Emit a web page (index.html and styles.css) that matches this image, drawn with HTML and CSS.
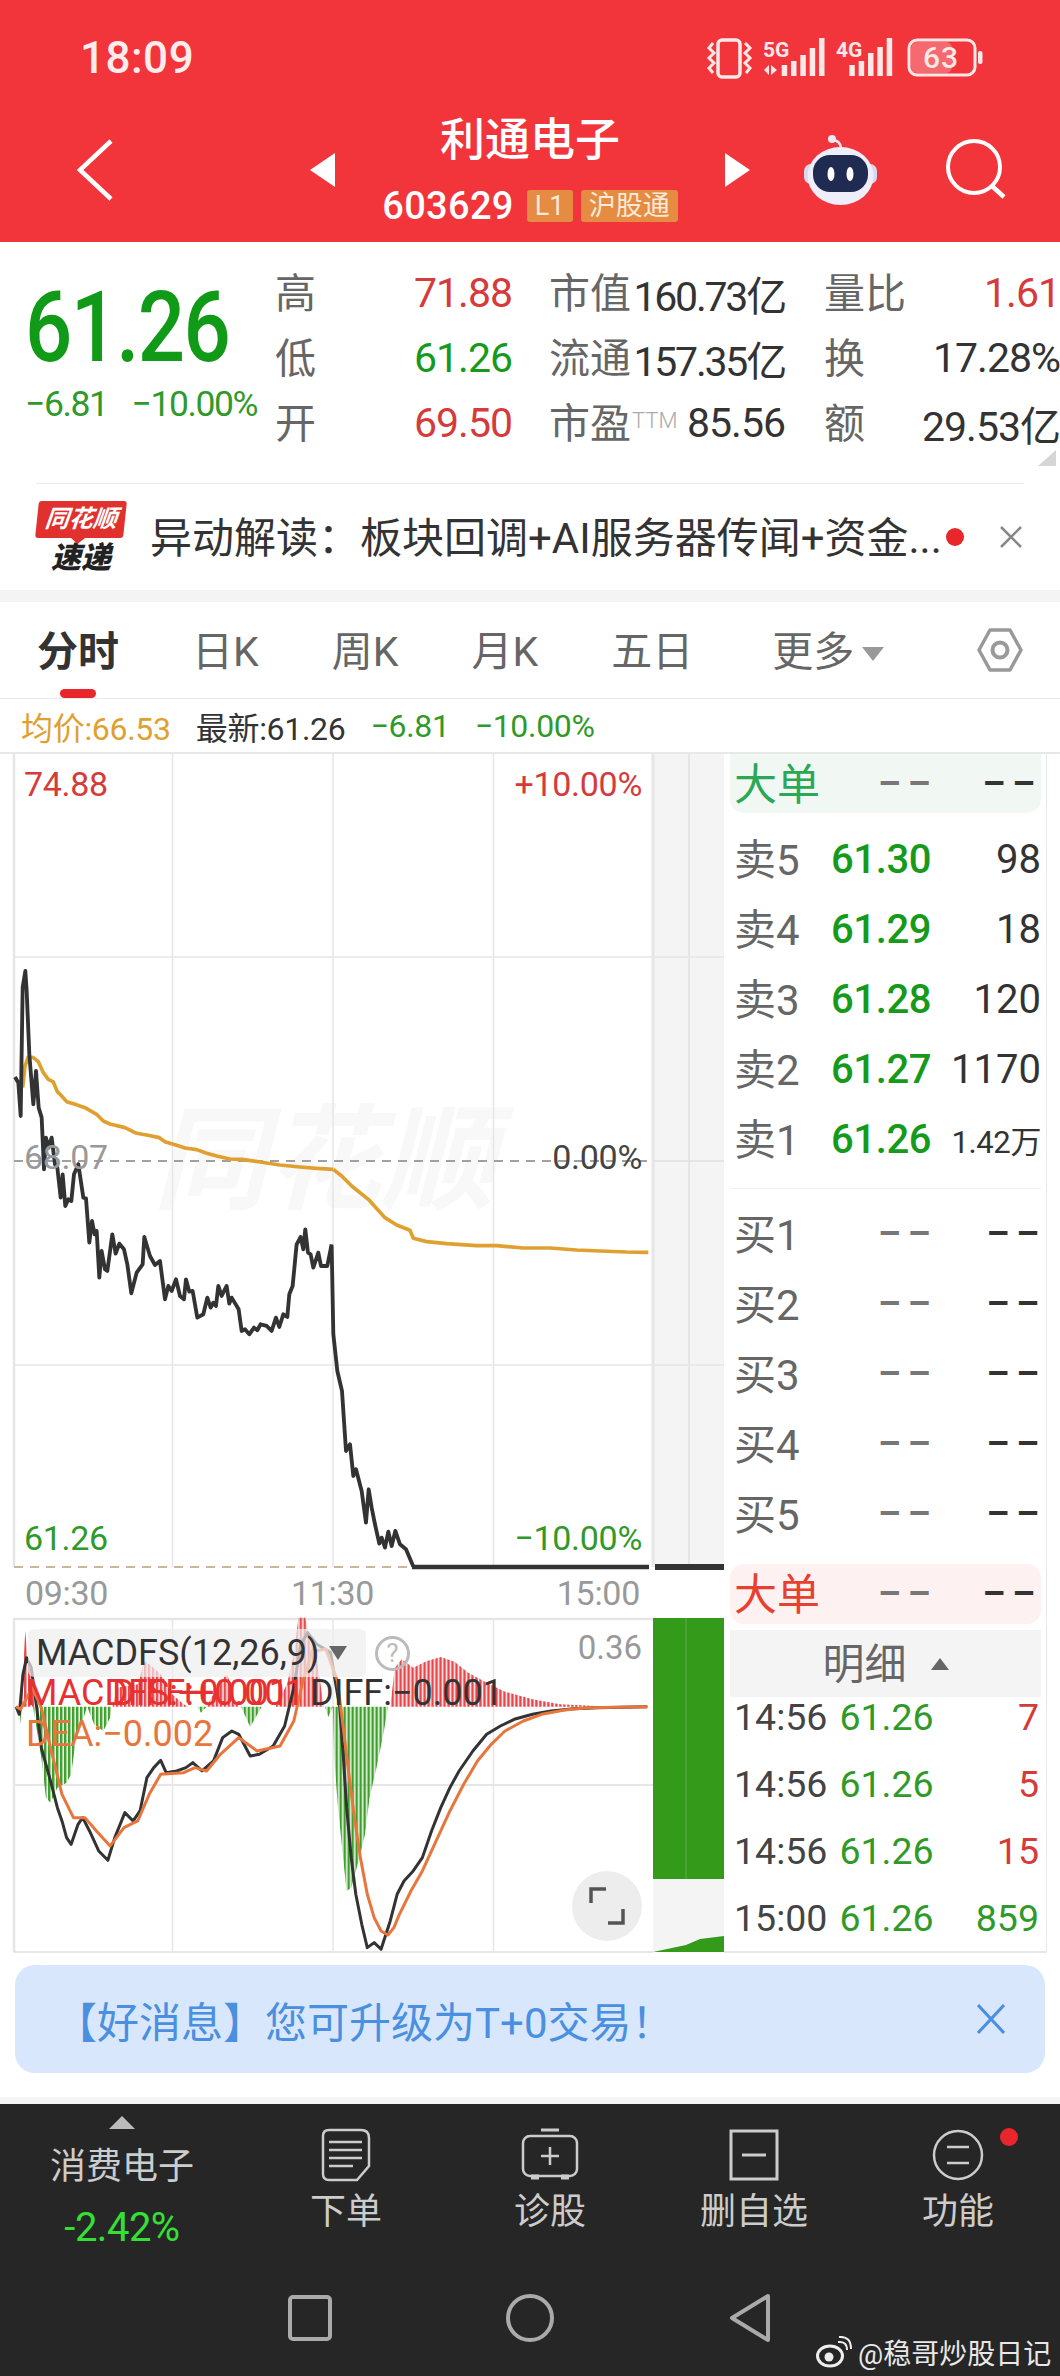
FILE: index.html
```html
<!DOCTYPE html>
<html lang="zh-CN">

<head>
    <meta charset="UTF-8">
    <meta name="viewport" content="width=device-width, initial-scale=1.0">
    <title>利通电子 603629</title>
    <link rel="stylesheet" href="styles.css">
</head>

<body>
    <header class="top">
        <div class="status">
            <span class="clock">18:09</span>
            <svg class="status-icons" width="280" height="56" viewBox="0 0 280 56">
                <g fill="none" stroke="#fde8e8" stroke-width="3">
                    <rect x="13" y="10" width="22" height="37" rx="4" stroke-width="3.5" />
                    <polyline points="8,13 4,18 9,23 4,28 9,33 4,38 8,43" />
                    <polyline points="40,13 45,18 40,23 45,28 40,33 45,38 41,43" />
                    <rect x="204" y="10" width="66" height="35" rx="8" />
                </g>
                <g fill="#fde8e8">
                    <polygon points="59,40 64,35 64,45" />
                    <polygon points="72,40 66,35 66,45" />
                    <rect x="76.7" y="35" width="5.5" height="11" />
                    <rect x="86" y="31" width="5.5" height="15" />
                    <rect x="95.3" y="25" width="5.5" height="21" />
                    <rect x="104.7" y="18" width="5.5" height="28" />
                    <rect x="114" y="8" width="5.5" height="38" />
                    <rect x="144.3" y="35" width="5.5" height="11" />
                    <rect x="153.7" y="31" width="5.5" height="15" />
                    <rect x="163" y="23" width="5.5" height="23" />
                    <rect x="172.3" y="17" width="5.5" height="29" />
                    <rect x="181.7" y="8" width="5.5" height="38" />
                    <rect x="206" y="12" width="41" height="31" rx="6" opacity="0.3" />
                    <rect x="273" y="21" width="4.5" height="13" rx="2" />
                    <text class="status-net" x="58" y="27">5G</text>
                    <text class="status-net" x="131" y="27">4G</text>
                    <text class="status-batt" x="236" y="38" text-anchor="middle">63</text>
                </g>
            </svg>
        </div>
        <div class="nav">
            <svg class="back" width="38" height="62" viewBox="0 0 38 62">
                <polyline points="35,2 4,31 35,60" fill="none" stroke="#fff" stroke-width="4.5" />
            </svg>
            <svg class="prev" width="25" height="34" viewBox="0 0 25 34">
                <polygon points="25,0 0,17 25,34" fill="#fff" />
            </svg>
            <div class="stock">
                <div class="stock-name">利通电子</div>
                <div class="stock-code">
                    <span>603629</span>
                    <span class="tag tag-l1">L1</span>
                    <span class="tag">沪股通</span>
                </div>
            </div>
            <svg width="25" height="34" viewBox="0 0 25 34">
                <polygon points="0,0 25,17 0,34" fill="#fff" />
            </svg>
            <svg class="robot" width="73" height="72" viewBox="0 0 73 72">
                <path d="M28 6 q8 0 9 8" fill="none" stroke="#efe9f6" stroke-width="2.5" />
                <circle cx="28" cy="5" r="4" fill="#efe9f6" />
                <rect x="0" y="30" width="73" height="20" rx="7" fill="#d9d8f0" />
                <ellipse cx="36.500" cy="42" rx="33" ry="29" fill="#eeedfa" />
                <rect x="9" y="21" width="55" height="37" rx="17" fill="#1f2b50" />
                <ellipse cx="27" cy="40" rx="3.500" ry="7" fill="#fff" />
                <ellipse cx="46" cy="40" rx="3.500" ry="7" fill="#fff" />
            </svg>
            <svg class="search" width="62" height="62" viewBox="0 0 62 62">
                <circle cx="29" cy="28" r="26" fill="none" stroke="#fff" stroke-width="4" />
                <line x1="47" y1="47" x2="59" y2="58" stroke="#fff" stroke-width="4.500" />
            </svg>
        </div>
    </header>

    <section class="quote">
        <div class="quote-main">
            <div class="last">61.26</div>
            <div class="change"><span>−6.81</span><span>−10.00%</span></div>
        </div>
        <div class="quote-grid">
            <div class="cell"><span class="cell-name">高</span><span class="up">71.88</span></div>
            <div class="cell"><span class="cell-name">市值</span><span class="tight">160.73亿</span></div>
            <div class="cell"><span class="cell-name">量比</span><span class="up">1.61</span></div>
            <div class="cell"><span class="cell-name">低</span><span class="down">61.26</span></div>
            <div class="cell"><span class="cell-name">流通</span><span class="tight">157.35亿</span></div>
            <div class="cell"><span class="cell-name">换</span><span>17.28%</span></div>
            <div class="cell"><span class="cell-name">开</span><span class="up">69.50</span></div>
            <div class="cell"><span class="cell-name">市盈<sup class="ttm">TTM</sup></span><span>85.56</span></div>
            <div class="cell"><span class="cell-name">额</span><span>29.53亿</span></div>
        </div>
        <div class="corner"></div>
    </section>

    <section class="news">
        <div class="logo">
            <div class="logo-flag">同花顺</div>
            <div class="logo-sub">速递</div>
        </div>
        <div class="news-text">异动解读：板块回调+AI服务器传闻+资金...</div>
        <span class="news-dot"></span>
        <svg class="news-close" width="24" height="24" viewBox="0 0 24 24">
            <path d="M2 2 L22 22 M22 2 L2 22" stroke="#888" stroke-width="2.500" />
        </svg>
    </section>

    <nav class="tabs">
        <span class="tab tab-active">分时</span>
        <span class="tab">日K</span>
        <span class="tab">周K</span>
        <span class="tab">月K</span>
        <span class="tab">五日</span>
        <span class="tab tab-more">更多<i class="tab-caret"></i></span>
        <svg class="tab-gear" width="46" height="44" viewBox="0 0 46 44">
            <polygon points="13,2 33,2 44,22 33,42 13,42 2,22" fill="none" stroke="#999" stroke-width="3.500" stroke-linejoin="round" />
            <circle cx="23" cy="22" r="7.500" fill="none" stroke="#999" stroke-width="4" />
        </svg>
    </nav>

    <div class="legend">
        <span class="avg">均价:66.53</span>
        <span>最新:61.26</span>
        <span class="down-soft">−6.81</span>
        <span class="down-soft">−10.00%</span>
    </div>

    <main class="board">
        <div class="charts">
            <div class="price-chart">
                <div class="watermark">同花顺</div>
                <svg class="chart-svg" width="711" height="813" viewBox="13 753 711 813">
                    <rect x="653" y="753" width="71" height="813" fill="#f4f4f4" />
                    <g stroke="#e6e6e6" stroke-width="1.500">
                        <line x1="14" y1="753" x2="14" y2="1566" stroke-width="2.500" />
                        <line x1="172.500" y1="753" x2="172.500" y2="1566" />
                        <line x1="333" y1="753" x2="333" y2="1566" />
                        <line x1="493.500" y1="753" x2="493.500" y2="1566" />
                        <line x1="653" y1="753" x2="653" y2="1566" stroke-width="3" />
                        <line x1="689" y1="753" x2="689" y2="1566" stroke-width="2" />
                        <line x1="14" y1="956" x2="724" y2="956" />
                        <line x1="14" y1="1364" x2="724" y2="1364" />
                    </g>
                    <line x1="653" y1="1160" x2="724" y2="1160" stroke="#e0e0e0" stroke-width="1.500" />
                    <line x1="14" y1="1160" x2="653" y2="1160" stroke="#a0a0a0" stroke-width="2" stroke-dasharray="9 7" />
                    <line x1="14" y1="1566" x2="413" y2="1566" stroke="#c9b79c" stroke-width="2" stroke-dasharray="9 7" />
                    <line x1="412" y1="1566" x2="649" y2="1566" stroke="#333" stroke-width="4.500" />
                    <line x1="655" y1="1566" x2="724" y2="1566" stroke="#333" stroke-width="6" />
                    <g fill="none" stroke-linejoin="round">
                        <g transform="translate(0 950) scale(.3333)" stroke="#e0a030" stroke-width="11">
                            <polyline points="68,410 75,345 85,318 100,320 115,332 130,365 145,385 160,393 172,422 185,435 200,452 225,460 255,470 290,490 310,510 330,519 375,530 410,547 440,552 478,560 495,572 530,583 555,591 590,596 620,607 650,615 690,624 725,625 780,633 840,642 900,648 950,652 1000,655" />
                        </g>
                        <g transform="translate(280 1100) scale(.3333)" stroke="#e0a030" stroke-width="11">
                            <polyline points="160,205 185,225 215,255 265,295 315,350 350,372 390,388 400,412 440,422 500,428 590,434 650,434 730,441 810,441 890,447 960,450 1040,453 1105,454" />
                        </g>
                        <g transform="translate(0 950) scale(.3333)" stroke="#333" stroke-width="11.500">
                            <polyline points="45,378 55,395 62,495 68,110 76,60 80,120 88,310 100,460 108,360 116,470 125,500 132,655 138,560 146,590 155,560 165,640 172,650 182,740 188,670 196,765 205,745 214,750 222,670 235,640 250,740 258,742 268,875 276,810 284,850 290,840 298,980 305,900 315,955 322,960 337,850 347,908 358,878 372,895 382,940 394,1027 410,965 428,940 433,858 450,915 465,942 480,930 495,1045 505,1005 515,1020 528,985 540,1035 552,1045 558,985 568,1022 578,1020 592,1100 610,1090 622,1040 632,1070 640,1055 648,1065 655,1005 665,1035 680,1005 688,1058 695,1040 716,1075 725,1140 735,1135 748,1150 762,1130 772,1138 782,1120 800,1125 815,1140 828,1100 838,1128 850,1090 862,1098 868,1030 878,1005 890,880 902,858 910,895 916,835 924,905 932,910 940,950 955,905 963,945 975,945 982,945 995,880" />
                        </g>
                        <g transform="translate(280 1100) scale(.3333)" stroke="#333" stroke-width="11.500">
                            <polyline points="155,435 160,700 172,810 186,870 198,1050 210,1030 220,1125 228,1105 245,1170 258,1265 266,1165 275,1220 285,1270 298,1328 305,1310 315,1340 325,1292 335,1335 346,1290 360,1330 378,1345 400,1397" />
                        </g>
                    </g>
                </svg>
                <span class="mark mark-high up">74.88</span>
                <span class="mark mark-high mark-right up">+10.00%</span>
                <span class="mark mark-mid mark-faint">68.07</span>
                <span class="mark mark-mid mark-right mark-dark">0.00%</span>
                <span class="mark mark-low down-soft">61.26</span>
                <span class="mark mark-low mark-right down-soft">−10.00%</span>
            </div>

            <div class="axis">
                <span>09:30</span>
                <span>11:30</span>
                <span>15:00</span>
            </div>

            <div class="macd-chart">
                <svg class="chart-svg" width="711" height="334" viewBox="13 1617 711 334">
                    <defs>
                        <pattern id="redBars" width="8.700" height="20" patternUnits="userSpaceOnUse">
                            <rect width="5.500" height="20" fill="#e5484d" />
                        </pattern>
                        <pattern id="greenBars" width="8.700" height="20" patternUnits="userSpaceOnUse">
                            <rect width="5.500" height="20" fill="#3f9f2c" />
                        </pattern>
                    </defs>
                    <rect x="653" y="1617" width="71" height="334" fill="#f4f4f4" />
                    <g stroke="#e6e6e6" stroke-width="1.500">
                        <line x1="14" y1="1617" x2="14" y2="1951" stroke-width="2.500" />
                        <line x1="172.500" y1="1617" x2="172.500" y2="1951" />
                        <line x1="333" y1="1617" x2="333" y2="1951" />
                        <line x1="493.500" y1="1617" x2="493.500" y2="1951" />
                        <line x1="14" y1="1618" x2="653" y2="1618" stroke-width="2.500" />
                        <line x1="14" y1="1784" x2="653" y2="1784" stroke-width="2" />
                        <line x1="14" y1="1951" x2="653" y2="1951" stroke-width="2" />
                    </g>
                    <rect x="653" y="1617" width="71" height="261" fill="#339a1a" />
                    <line x1="686" y1="1617" x2="686" y2="1878" stroke="#5fae4a" stroke-width="1" />
                    <polygon points="653,1951 686,1944 700,1938 724,1935 724,1951" fill="#339a1a" />
                    <g transform="translate(0 1540) scale(.4591 .3333)">
                        <polygon fill="url(#redBars)" points="45,497 50,400 55,270 60,350 70,420 75,497" />
                        <polygon fill="url(#redBars)" points="245,497 255,440 300,430 315,360 330,375 350,400 375,460 400,490 410,497" />
                        <polygon fill="url(#redBars)" points="450,497 480,420 495,400 510,470 520,497" />
                        <polygon fill="url(#redBars)" points="600,497 625,430 640,340 650,230 665,230 675,300 690,350 705,497" />
                        <polygon fill="url(#redBars)" points="850,497 860,380 875,355 900,380 930,360 960,348 990,362 1020,395 1060,425 1100,452 1160,475 1220,490 1300,495 1410,497" />
                        <polygon fill="url(#greenBars)" points="40,497 42,570 48,497" />
                        <polygon fill="url(#greenBars)" points="72,497 90,650 100,770 110,785 125,740 145,725 155,700 165,600 190,497" />
                        <polygon fill="url(#greenBars)" points="190,497 205,550 225,570 240,530 243,497" />
                        <polygon fill="url(#greenBars)" points="430,497 438,515 450,497" />
                        <polygon fill="url(#greenBars)" points="525,497 545,558 570,497" />
                        <polygon fill="url(#greenBars)" points="708,497 715,528 725,497 728,650 735,780 745,920 755,1050 765,1040 785,940 795,880 805,770 820,680 835,580 845,497" />
                        <polyline class="macd-line" stroke="#333" points="35,497 42,520 50,400 58,350 68,380 80,500 90,620 110,720 125,800 135,840 145,890 155,910 170,850 180,830 195,870 215,930 235,958 250,890 272,815 290,840 305,810 320,710 335,680 350,658 362,695 385,690 405,680 420,665 440,690 465,660 485,590 505,570 520,580 545,645 565,640 595,615 620,555 640,440 655,310 670,275 690,310 720,335 740,500 748,650 755,800 765,950 775,1060 788,1150 800,1220 815,1205 830,1225 850,1140 865,1060 880,1020 900,990 920,950 940,870 960,800 980,740 1000,690 1030,630 1060,580 1090,555 1120,535 1160,520 1200,510 1250,503 1300,500 1410,497" />
                        <polyline class="macd-line" stroke="#e8763c" points="35,497 45,505 70,440 90,500 110,620 135,760 160,830 185,830 210,870 240,915 270,860 300,840 325,760 350,700 400,695 425,680 450,690 480,640 520,590 560,630 610,615 640,540 660,420 680,330 710,325 735,420 745,530 760,700 772,830 785,950 800,1060 815,1130 830,1170 845,1182 858,1160 870,1120 895,1050 920,990 950,900 980,810 1010,730 1040,660 1070,610 1100,570 1140,540 1180,520 1230,507 1280,500 1410,497" />
                    </g>
                </svg>
                <div class="macd-pick">MACDFS(12,26,9)<i class="macd-caret"></i></div>
                <span class="macd-help">?</span>
                <span class="macd-scale">0.36</span>
                <span class="macd-val macd-red">MACDFS:+0.001</span>
                <span class="macd-val macd-red macd-over">DIFF:+0.001</span>
                <span class="macd-val macd-diff">DIFF:−0.001</span>
                <span class="macd-val macd-dea">DEA:−0.002</span>
                <button class="expand" type="button">
                    <svg width="36" height="38" viewBox="0 0 36 38">
                        <path d="M2 16 V2 H17 M34 22 V36 H19" fill="none" stroke="#555" stroke-width="3.500" />
                    </svg>
                </button>
            </div>
        </div>

        <aside class="book">
            <div class="big-order big-sell">
                <span class="big-name">大单</span>
                <span class="dash dash-price">––</span>
                <span class="dash">––</span>
            </div>
            <div class="levels levels-sell">
                <div class="level"><span class="level-name">卖5</span><span class="level-price">61.30</span><span class="level-qty">98</span></div>
                <div class="level"><span class="level-name">卖4</span><span class="level-price">61.29</span><span class="level-qty">18</span></div>
                <div class="level"><span class="level-name">卖3</span><span class="level-price">61.28</span><span class="level-qty">120</span></div>
                <div class="level"><span class="level-name">卖2</span><span class="level-price">61.27</span><span class="level-qty">1170</span></div>
                <div class="level"><span class="level-name">卖1</span><span class="level-price">61.26</span><span class="level-qty level-small">1.42万</span></div>
            </div>
            <div class="levels levels-buy">
                <div class="level"><span class="level-name">买1</span><span class="dash dash-price">––</span><span class="dash">––</span></div>
                <div class="level"><span class="level-name">买2</span><span class="dash dash-price">––</span><span class="dash">––</span></div>
                <div class="level"><span class="level-name">买3</span><span class="dash dash-price">––</span><span class="dash">––</span></div>
                <div class="level"><span class="level-name">买4</span><span class="dash dash-price">––</span><span class="dash">––</span></div>
                <div class="level"><span class="level-name">买5</span><span class="dash dash-price">––</span><span class="dash">––</span></div>
            </div>
            <div class="big-order big-buy">
                <span class="big-name">大单</span>
                <span class="dash dash-price">––</span>
                <span class="dash">––</span>
            </div>
            <div class="detail-head">明细<i class="detail-caret"></i></div>
            <div class="ticks">
                <div class="tick"><span class="tick-time">14:56</span><span class="down-soft">61.26</span><span class="tick-qty up">7</span></div>
                <div class="tick"><span class="tick-time">14:56</span><span class="down-soft">61.26</span><span class="tick-qty up">5</span></div>
                <div class="tick"><span class="tick-time">14:56</span><span class="down-soft">61.26</span><span class="tick-qty up">15</span></div>
                <div class="tick"><span class="tick-time">15:00</span><span class="down-soft">61.26</span><span class="tick-qty down-soft">859</span></div>
            </div>
        </aside>
    </main>

    <section class="promo">
        <div class="promo-box">
            <span>【好消息】您可升级为T+0交易！</span>
            <svg width="28" height="30" viewBox="0 0 28 30">
                <path d="M1 1 L27 29 M27 1 L1 29" stroke="#4a8fe0" stroke-width="3" />
            </svg>
        </div>
    </section>

    <footer class="dock">
        <div class="actions">
            <div class="sector">
                <i class="sector-caret"></i>
                <span class="sector-name">消费电子</span>
                <span class="sector-pct">-2.42%</span>
            </div>
            <div class="action">
                <svg width="50" height="54" viewBox="0 0 50 54">
                    <path d="M8 2 H40 Q48 2 48 10 V38 L36 52 H8 Q2 52 2 46 V8 Q2 2 8 2 Z" fill="none" stroke="#ccc" stroke-width="2.500" />
                    <path d="M8 14 H41 M8 22 H41 M8 30 H41 M8 38 H32" stroke="#ccc" stroke-width="2.500" />
                </svg>
                <span>下单</span>
            </div>
            <div class="action">
                <svg width="58" height="54" viewBox="0 0 58 54">
                    <path d="M20 2 H38" stroke="#ccc" stroke-width="3" />
                    <rect x="2" y="8" width="54" height="40" rx="7" fill="none" stroke="#ccc" stroke-width="2.500" />
                    <path d="M29 19 V37 M20 28 H38" stroke="#ccc" stroke-width="2.500" />
                    <path d="M10 49 H18 M40 49 H48" stroke="#ccc" stroke-width="5" />
                </svg>
                <span>诊股</span>
            </div>
            <div class="action">
                <svg width="50" height="54" viewBox="0 0 50 54">
                    <rect x="2" y="3" width="46" height="48" fill="none" stroke="#ccc" stroke-width="3" />
                    <path d="M13 27 H37" stroke="#ccc" stroke-width="3" />
                </svg>
                <span>删自选</span>
            </div>
            <div class="action action-dot">
                <svg width="52" height="54" viewBox="0 0 52 54">
                    <circle cx="26" cy="27" r="24" fill="none" stroke="#ccc" stroke-width="2.500" />
                    <path d="M15 19 H37 M15 35 H37" stroke="#ccc" stroke-width="2.500" />
                </svg>
                <span>功能</span>
            </div>
        </div>
        <div class="sys-nav">
            <svg width="44" height="46" viewBox="0 0 44 46">
                <rect x="2" y="2" width="40" height="42" rx="3" fill="none" stroke="#aaa" stroke-width="4" />
            </svg>
            <svg width="48" height="48" viewBox="0 0 48 48">
                <circle cx="24" cy="24" r="22" fill="none" stroke="#aaa" stroke-width="4" />
            </svg>
            <svg width="44" height="50" viewBox="0 0 44 50">
                <polygon points="40,3 4,25 40,47" fill="none" stroke="#aaa" stroke-width="4" stroke-linejoin="round" />
            </svg>
        </div>
        <div class="weibo">
            <svg width="36" height="32" viewBox="0 0 36 32">
                <ellipse cx="14" cy="20" rx="12.500" ry="10" fill="none" stroke="#eee" stroke-width="3" />
                <circle cx="13" cy="21" r="4.500" fill="#eee" />
                <path d="M22 6 Q31 5 31 14 M23 1 Q35 0 35 13" fill="none" stroke="#eee" stroke-width="2" />
            </svg>
            <span>@稳哥炒股日记</span>
        </div>
    </footer>
</body>

</html>
```

FILE: styles.css
```css
* {
    box-sizing: border-box;
}

body {
    margin: 0;
    width: 1060px;
    height: 2376px;
    overflow: hidden;
    background-color: #ffffff;
    color: #333;
    font-family: 'Roboto', 'Noto Sans CJK SC', sans-serif;
}

.up {
    color: #d63a3a;
}

.down {
    color: #169a1c;
}

.down-soft {
    color: #2f9a2a;
}

/* header */

.top {
    height: 242px;
    padding-top: 30px;
    background-color: #f2343b;
    color: #fff;
}

.status {
    display: flex;
    justify-content: space-between;
    align-items: center;
    height: 56px;
    padding: 0 75px 0 80px;
}

.clock {
    font-size: 44px;
    font-weight: 500;
    letter-spacing: 0.5px;
    color: #fdecec;
}

.status-net {
    font-size: 21px;
    font-weight: 700;
}

.status-batt {
    font-size: 30px;
    font-weight: 500;
    letter-spacing: 1px;
}

.nav {
    display: flex;
    align-items: center;
    margin-top: 26px;
    padding-left: 76px;
}

.prev {
    margin-left: 196px;
}

.stock {
    width: 390px;
    text-align: center;
}

.stock-name {
    height: 58px;
    font-size: 45px;
    font-weight: 500;
    line-height: 58px;
}

.stock-code {
    display: flex;
    justify-content: center;
    align-items: center;
    gap: 8px;
    height: 44px;
    margin-top: 14px;
    font-size: 38px;
    font-weight: 500;
    letter-spacing: 0.3px;
}

.stock-code > span:first-child {
    margin-right: 5px;
}

.tag {
    height: 32px;
    padding: 0 8px;
    border-radius: 3px;
    background-color: #e58b42;
    color: #fde9d8;
    font-size: 27px;
    font-weight: 400;
    line-height: 32px;
    letter-spacing: 0;
}

.tag-l1 {
    width: 46px;
    padding: 0;
}

.robot {
    margin-left: 54px;
}

.search {
    margin-left: 68px;
}

/* quote */

.quote {
    position: relative;
    display: flex;
    height: 241px;
}

.quote-main {
    width: 275px;
    padding: 36px 0 0 25px;
}

.last {
    color: #119a17;
    font-size: 98px;
    font-weight: 500;
    line-height: 100px;
    letter-spacing: -2px;
    transform: scaleX(.85);
    transform-origin: left center;
}

.change {
    display: flex;
    gap: 24px;
    margin-top: 6px;
    color: #2f9a2a;
    font-size: 35.500px;
    line-height: 40px;
    letter-spacing: -1.4px;
}

.quote-grid {
    display: grid;
    grid-template-columns: 274px 275px 236px;
    grid-auto-rows: 65px;
    padding-top: 18px;
    font-size: 41px;
    letter-spacing: -1px;
}

.cell {
    display: flex;
    justify-content: space-between;
    align-items: center;
    padding-right: 37px;
    white-space: nowrap;
}

.cell:nth-child(3n+2) {
    padding-right: 39px;
}

.cell:nth-child(3n) {
    padding-right: 0;
}

.cell-name {
    margin-top: -6px;
    color: #666;
    font-size: 41px;
    letter-spacing: 0;
}

.tight {
    letter-spacing: -2.200px;
}

.ttm {
    margin-left: 1px;
    color: #aaa;
    font-size: 22px;
    font-weight: 300;
    line-height: 0;
    vertical-align: 10px;
}

.corner {
    position: absolute;
    right: 4px;
    bottom: 17px;
    width: 0;
    height: 0;
    border-left: 18px solid transparent;
    border-bottom: 16px solid #d6d6d6;
}

/* news */

.news {
    display: flex;
    align-items: center;
    height: 107px;
    margin: 0 36px;
    border-top: 1px solid #ececec;
}

.logo {
    width: 88px;
    margin-left: 1px;
    text-align: center;
}

.logo-flag {
    position: relative;
    height: 37px;
    border-radius: 3px;
    background-color: #e0312f;
    color: #fff;
    font-size: 24px;
    font-weight: 700;
    font-style: italic;
    line-height: 37px;
    transform: skewX(-6deg);
}

.logo-flag::after {
    content: "";
    position: absolute;
    left: 36px;
    bottom: -6px;
    border-top: 6px solid #e0312f;
    border-left: 7px solid transparent;
    border-right: 7px solid transparent;
}

.logo-sub {
    margin-top: 4px;
    color: #222;
    font-size: 30px;
    font-weight: 900;
    font-style: italic;
    line-height: 32px;
}

.news-text {
    width: 796px;
    margin-top: -5px;
    margin-left: 25px;
    color: #333;
    font-size: 42px;
    white-space: nowrap;
}

.news-dot {
    flex: none;
    width: 18px;
    height: 18px;
    border-radius: 50%;
    background-color: #e8262c;
}

.news-close {
    flex: none;
    margin-left: 35px;
}

/* tabs */

.tabs {
    display: flex;
    align-items: center;
    height: 109px;
    padding: 0 37px 4px 37px;
    border-top: 12px solid #f4f4f4;
    border-bottom: 1px solid #e8e8e8;
    color: #666;
    font-size: 41px;
    gap: 73px;
}

.tab {
    position: relative;
    white-space: nowrap;
}

.tab-active {
    color: #333;
    font-weight: 700;
}

.tab-active::after {
    content: "";
    position: absolute;
    left: 23px;
    bottom: -20px;
    width: 36px;
    height: 9px;
    border-radius: 5px;
    background-color: #e8262c;
}

.tab-more {
    margin-left: 6px;
}

.tab-caret {
    display: inline-block;
    margin-left: 8px;
    border-top: 14px solid #999;
    border-left: 11px solid transparent;
    border-right: 11px solid transparent;
    vertical-align: 5px;
}

.tab-gear {
    margin-left: auto;
    margin-top: 4px;
}

.legend {
    display: flex;
    align-items: center;
    gap: 25px;
    height: 55px;
    padding-left: 21px;
    border-bottom: 2px solid #e8e8e8;
    font-size: 32px;
    letter-spacing: -0.3px;
}

.avg {
    color: #e0a030;
}

/* charts and order book */

.board {
    display: flex;
    height: 1199px;
    padding-left: 13px;
}

.charts {
    width: 711px;
}

.price-chart,
.macd-chart {
    position: relative;
}

.chart-svg {
    position: relative;
    display: block;
    overflow: visible;
}

.macd-line {
    fill: none;
    stroke-width: 3px;
    stroke-linejoin: round;
    vector-effect: non-scaling-stroke;
}

.watermark {
    position: absolute;
    left: 140px;
    top: 342px;
    color: #f8f8f8;
    font-size: 114px;
    font-weight: 700;
    font-style: italic;
    line-height: 130px;
    white-space: nowrap;
}

.mark {
    position: absolute;
    left: 11px;
    font-size: 34px;
    line-height: 36px;
    letter-spacing: -0.3px;
}

.mark-right {
    left: auto;
    right: 82px;
}

.mark-high {
    top: 12px;
}

.mark-mid {
    top: 385px;
}

.mark-low {
    top: 766px;
}

.mark-faint {
    color: #999;
}

.mark-dark {
    color: #444;
}

.axis {
    display: flex;
    justify-content: space-between;
    align-items: center;
    height: 51px;
    padding: 0 84px 0 12px;
    color: #999;
    font-size: 34px;
    letter-spacing: -0.3px;
}

.macd-pick {
    position: absolute;
    left: 15px;
    top: 11px;
    display: flex;
    align-items: center;
    width: 338px;
    height: 48px;
    padding-left: 8px;
    border-radius: 6px;
    background-color: rgba(238, 238, 238, 0.7);
    font-size: 36px;
    white-space: nowrap;
}

.macd-caret {
    margin-left: 9px;
    border-top: 14px solid #666;
    border-left: 9px solid transparent;
    border-right: 9px solid transparent;
}

.macd-help {
    position: absolute;
    left: 362px;
    top: 18px;
    width: 35px;
    height: 35px;
    border: 3px solid #bbb;
    border-radius: 50%;
    color: #bbb;
    font-size: 26px;
    line-height: 29px;
    text-align: center;
}

.macd-scale {
    position: absolute;
    right: 82px;
    top: 12px;
    color: #999;
    font-size: 33px;
    line-height: 36px;
}

.macd-val {
    position: absolute;
    left: 13px;
    top: 54px;
    font-size: 36px;
    line-height: 42px;
    white-space: nowrap;
}

.macd-red {
    color: #e83030;
}

.macd-over {
    left: 99px;
}

.macd-diff {
    left: 297px;
    color: #333;
}

.macd-dea {
    top: 95px;
    color: #e8763c;
}

.expand {
    position: absolute;
    left: 559px;
    top: 253px;
    display: flex;
    justify-content: center;
    align-items: center;
    width: 70px;
    height: 70px;
    padding: 0;
    border: none;
    border-radius: 50%;
    background-color: rgba(235, 235, 235, 0.9);
}

.book {
    width: 323px;
    height: 1199px;
    padding: 0 5px 0 6px;
    border-right: 1px solid #e8e8e8;
    border-bottom: 2px solid #e8e8e8;
    font-size: 40px;
}

.big-order {
    display: flex;
    align-items: center;
    height: 59px;
    padding: 0 4px;
    border-radius: 0 0 14px 14px;
}

.big-sell {
    background-color: #f1f8f4;
    color: #2aa855;
}

.big-buy {
    height: 60px;
    margin-top: 15px;
    border-radius: 14px;
    background-color: #fdf1f1;
    color: #e8402f;
}

.big-name {
    width: 144px;
    margin-top: -6px;
    font-size: 43px;
}

.dash {
    margin-left: auto;
    margin-right: -5px;
    color: #333;
    font-size: 36px;
    font-weight: 700;
    line-height: 1;
    letter-spacing: 7px;
}

.dash-price {
    margin-left: 0;
    color: #777;
}

.levels-sell {
    margin-top: 11px;
    padding-bottom: 14px;
    border-bottom: 1px solid #f0f0f0;
}

.levels-buy {
    margin-top: 10px;
}

.level {
    display: flex;
    align-items: center;
    height: 70px;
    padding: 0 0 0 4px;
    white-space: nowrap;
}

.level-name {
    width: 97px;
    margin-top: -6px;
    color: #666;
    font-size: 42px;
}

.level-price {
    width: 97px;
    color: #169a1c;
    font-weight: 500;
    letter-spacing: -0.4px;
}

.level-qty {
    margin-left: auto;
    color: #333;
}

.level-small {
    font-size: 31px;
    letter-spacing: -0.4px;
}

.levels .dash-price {
    margin-left: 47px;
}

.big-order .dash-price {
    margin-left: 0;
}

.detail-head {
    display: flex;
    justify-content: center;
    align-items: center;
    height: 67px;
    margin-top: 6px;
    padding-bottom: 6px;
    background-color: #f4f4f4;
    color: #666;
    font-size: 42px;
}

.detail-caret {
    margin-left: 24px;
    margin-top: 6px;
    border-bottom: 12px solid #666;
    border-left: 9px solid transparent;
    border-right: 9px solid transparent;
}

.ticks {
    display: flex;
    flex-direction: column;
    gap: 23px;
    margin-top: -2px;
}

.tick {
    display: flex;
    align-items: center;
    gap: 12px;
    height: 44px;
    padding: 0 2px 0 4px;
    font-size: 37.500px;
    white-space: nowrap;
}

.tick-time {
    color: #444;
}

.tick-qty {
    margin-left: auto;
}

/* bottom */

.promo {
    height: 151px;
    padding: 12px 15px 0;
    border-bottom: 7px solid #f4f4f4;
}

.promo-box {
    display: flex;
    justify-content: space-between;
    align-items: center;
    height: 108px;
    padding: 0 40px 0 40px;
    border-radius: 20px;
    background-color: #d8e7fb;
    color: #4a8fe0;
    font-size: 42px;
}

.dock {
    position: relative;
    height: 273px;
    background-color: #262626;
    color: #ccc;
}

.actions {
    display: flex;
    height: 189px;
}

.sector {
    display: flex;
    flex-direction: column;
    align-items: center;
    width: 244px;
    padding-top: 12px;
}

.sector-caret {
    border-bottom: 13px solid #bbb;
    border-left: 13px solid transparent;
    border-right: 13px solid transparent;
}

.sector-name {
    margin-top: 16px;
    font-size: 36px;
    line-height: 44px;
}

.sector-pct {
    margin-top: 17px;
    color: #35e035;
    font-size: 40px;
    line-height: 44px;
    letter-spacing: -0.5px;
}

.action {
    position: relative;
    display: flex;
    flex-direction: column;
    align-items: center;
    width: 204px;
    padding-top: 24px;
    font-size: 36px;
    line-height: 44px;
}

.action span {
    margin-top: 8px;
}

.action-dot::after {
    content: "";
    position: absolute;
    left: 144px;
    top: 24px;
    width: 18px;
    height: 18px;
    border-radius: 50%;
    background-color: #e8262c;
}

.sys-nav {
    display: flex;
    justify-content: center;
    align-items: center;
    gap: 174px;
}

.weibo {
    position: absolute;
    left: 816px;
    top: 228px;
    display: flex;
    align-items: center;
    gap: 6px;
    color: #e8e8e8;
    font-size: 28px;
    white-space: nowrap;
}
```
